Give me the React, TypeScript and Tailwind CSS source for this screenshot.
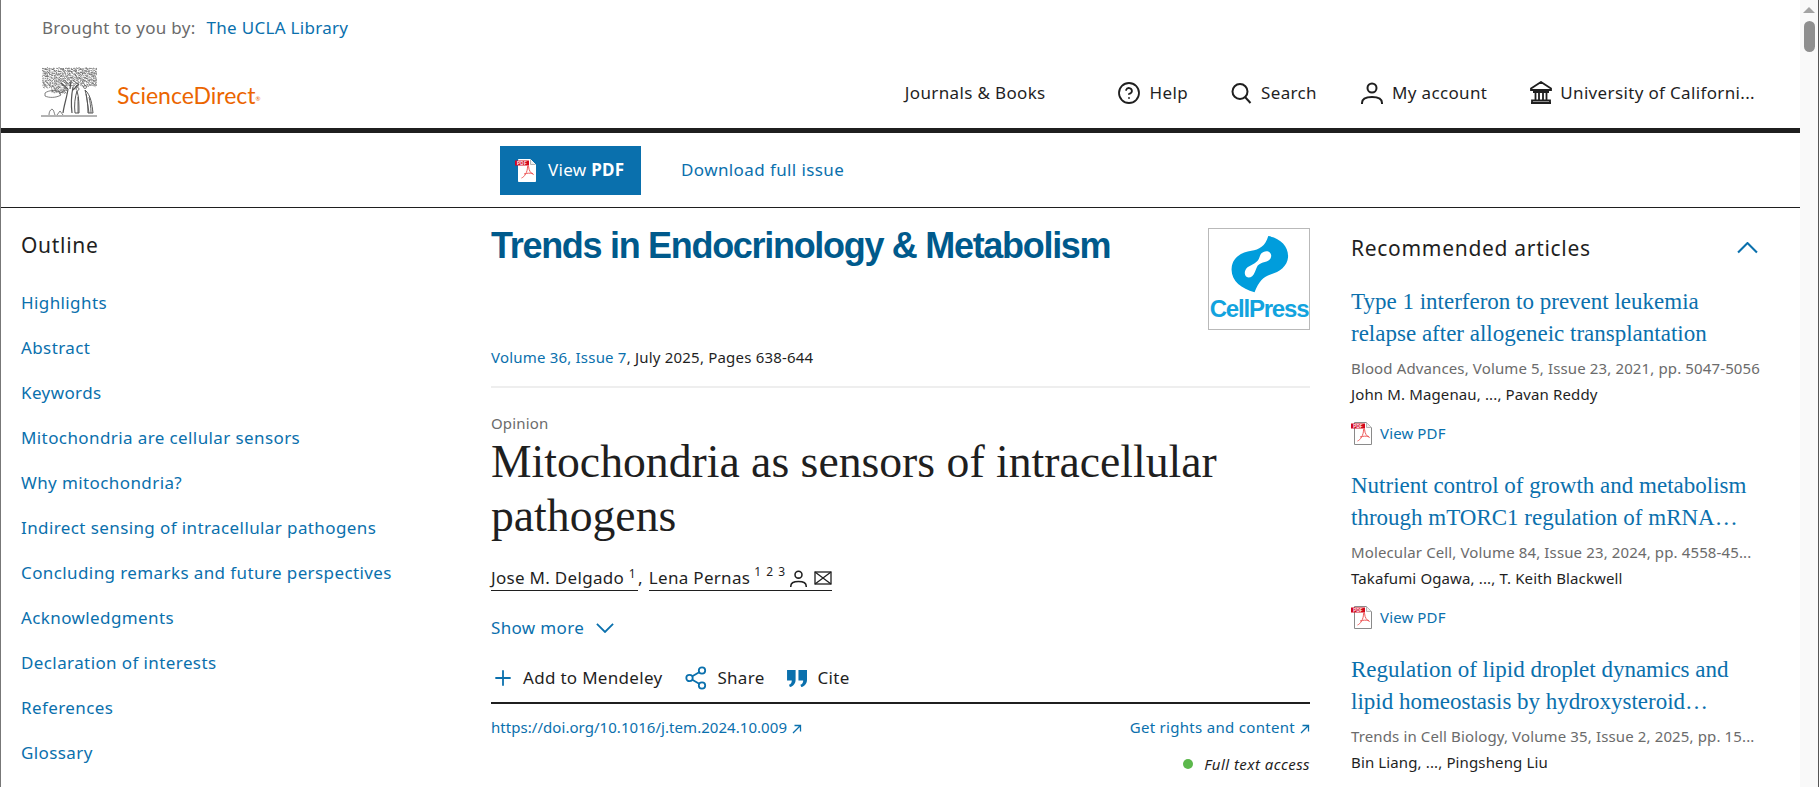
import React from "react";
import { CircleHelp, Plus } from "lucide-react";

const sans = "font-['Noto_Sans','Open_Sans',sans-serif]";
const serif = "font-['Liberation_Serif','Noto_Serif',serif]";

const outline = [
  "Highlights",
  "Abstract",
  "Keywords",
  "Mitochondria are cellular sensors",
  "Why mitochondria?",
  "Indirect sensing of intracellular pathogens",
  "Concluding remarks and future perspectives",
  "Acknowledgments",
  "Declaration of interests",
  "References",
  "Glossary",
];

const articles = [
  {
    title: ["Type 1 interferon to prevent leukemia", "relapse after allogeneic transplantation"],
    source: "Blood Advances, Volume 5, Issue 23, 2021, pp. 5047-5056",
    authors: "John M. Magenau, ..., Pavan Reddy",
    pdf: true,
  },
  {
    title: ["Nutrient control of growth and metabolism", "through mTORC1 regulation of mRNA…"],
    source: "Molecular Cell, Volume 84, Issue 23, 2024, pp. 4558-45...",
    authors: "Takafumi Ogawa, ..., T. Keith Blackwell",
    pdf: true,
  },
  {
    title: ["Regulation of lipid droplet dynamics and", "lipid homeostasis by hydroxysteroid…"],
    source: "Trends in Cell Biology, Volume 35, Issue 2, 2025, pp. 15...",
    authors: "Bin Liang, ..., Pingsheng Liu",
    pdf: false,
  },
];

// scribbled leaves for the tree, seeded so every render gives the same picture
function canopy() {
  let seed = 11;
  const rnd = () => {
    seed = (seed * 16807) % 2147483647;
    return seed / 2147483647;
  };
  let d = "";
  for (let y = 1; y < 25; y += 1.7) {
    for (let x = 1; x < 54; x += 2.2) {
      if (y > 18 && x > 24) continue;
      if (y > 21 && x < 8) continue;
      const a = x + rnd();
      const b = y + rnd();
      d += `M${a.toFixed(1)} ${b.toFixed(1)}q${(rnd() * 2).toFixed(1)} ${(-rnd() * 2).toFixed(1)} ${(1 + rnd() * 2).toFixed(1)} ${(rnd() * 1.5).toFixed(1)}`;
    }
  }
  return d;
}

function TreeLogo() {
  return (
    <svg width="56" height="50" viewBox="0 0 56 50" fill="none" stroke="#555" strokeWidth="0.75">
      <path d={canopy()} />
      <path d="M4 26c4-3 10-3 14-1l2 3c-5 3-12 3-16 1zM18 27l6-4" />
      <path d="M27 22c-1 8-4 16-5 24M32 20c-2 10-2 18-1 26M30 14l-1 8M20 16l7 6M38 17l-6 6" strokeWidth="1.200" />
      <path d="M36 24c-2 6-3 14-2 22h4c0-8 0-16-2-22zM44 23c2 6 3 15 3 23h5c-1-8-2-18-8-23z" strokeWidth="1" />
      <path d="M45 27c1 6 2 12 3 19M48 30c1 5 2 10 2 16M37 30v16" strokeWidth="0.900" />
      <circle cx="36.500" cy="22" r="1.500" />
      <circle cx="44" cy="20" r="1.500" />
      <path d="M0 49h56" strokeWidth="0.900" />
      <path d="M8 48c0-3 1-5 3-6 2 1 2 4 3 6M16 48l3-4 3 4" />
    </svg>
  );
}

function PdfIcon({ label = false }: { label?: boolean }) {
  return (
    <svg width="22" height="23" viewBox="0 0 22 23" fill="none" className="shrink-0">
      <path d="M3.500 3.500V.5h12l5 5v17h-17z" fill="#fff" stroke={label ? "#fff" : "#8a8a8a"} />
      <path d="M15.500.5v5h5" stroke="#b5b5b5" fill="#eee" />
      <path
        d="M6.500 19c3-1 6-6 6-11 0-1.500 1.200-1.500 1.200 0 0 3 2 6.500 5 7.500M9 15c3-1 6-1 9-.5"
        stroke="#ee5a5a"
        strokeWidth="1"
      />
      <rect x="0" y="1.500" width="14" height="5" fill="#d2071b" />
      <text x="7" y="5.700" textAnchor="middle" fontSize="4.500" fontWeight="700" fill="#fff" fontFamily="Liberation Sans, sans-serif">
        PDF
      </text>
    </svg>
  );
}

function SearchIcon() {
  return (
    <svg width="22" height="24" viewBox="0 0 22 24" fill="none" stroke="#1f1f1f" strokeWidth="2">
      <circle cx="10" cy="10.500" r="7.500" />
      <path d="M15 16l5.500 6" />
    </svg>
  );
}

function UserIcon({ size = 22 }: { size?: number }) {
  return (
    <svg width={size} height={size} viewBox="0 0 22 22" fill="none" stroke="#1f1f1f" strokeWidth="2">
      <circle cx="11" cy="6" r="4.500" />
      <path d="M1 22v-1c0-4 4-6 10-6s10 2 10 6v1" />
    </svg>
  );
}

function BankIcon() {
  return (
    <svg width="22" height="23" viewBox="0 0 22 23" fill="none" stroke="#1f1f1f" strokeWidth="1.800">
      <path d="M1 7.500 11 1l10 6.500v1.500H1z" />
      <path d="M3 11h16M5.500 11v8M9 11v8M13 11v8M16.500 11v8" />
      <path d="M2 22v-2.500h18V22zM1 22h20" />
    </svg>
  );
}

function MailIcon() {
  return (
    <svg width="18" height="14" viewBox="0 0 18 14" fill="none" stroke="#1f1f1f" strokeWidth="1.300">
      <rect x="1" y="1" width="16" height="12" />
      <path d="M1 1l8 6 8-6M1 13l8-6 8 6" />
    </svg>
  );
}

function ShareIcon() {
  return (
    <svg width="22" height="24" viewBox="0 0 22 24" fill="none" stroke="#0a70ad" strokeWidth="1.800">
      <circle cx="4.500" cy="12" r="3.200" />
      <circle cx="17" cy="4.500" r="3.200" />
      <circle cx="17" cy="19.500" r="3.200" />
      <path d="M7.300 10.300 14.200 6.200M7.300 13.700l6.900 4.100" />
    </svg>
  );
}

function QuoteIcon() {
  return (
    <svg width="21" height="19" viewBox="0 0 22 20" fill="#0a70ad">
      <path d="M0 1h9v10c0 4-2 7-6 8l-1-2.500c2-.7 3-2 3-4.500H0zM12 1h9v10c0 4-2 7-6 8l-1-2.500c2-.7 3-2 3-4.500h-5z" />
    </svg>
  );
}

function Chevron({ up = false, w }: { up?: boolean; w: number }) {
  return (
    <svg width={w} height={w * 0.55} viewBox="0 0 20 11" fill="none" stroke="#0a70ad" strokeWidth="2">
      <path d={up ? "M1 10 10 1l9 9" : "M1 1l9 9 9-9"} />
    </svg>
  );
}

function ArrowOut() {
  return (
    <svg width="10" height="10" viewBox="0 0 10 10" fill="none" stroke="#0a70ad" strokeWidth="1.300" className="ml-[5px] inline-block">
      <path d="M1 9 8.500 1.500M2.500 1.500h6v6" />
    </svg>
  );
}

function CellPressLogo() {
  return (
    <div className="flex h-[102px] w-[102px] shrink-0 flex-col items-center overflow-hidden border border-[#b9b9b9] bg-white">
      <svg width="59" height="59" viewBox="85 38 185 182" className="mt-[6px]">
        <path
          fillRule="evenodd"
          fill="#009ddc"
          d="M205 40c38 6 64 32 62 66-2 27-26 46-55 54-22 6-38 24-50 56-42-12-74-36-72-74 2-36 32-52 62-56 24-3 44-14 53-46zM190 90C205 82 220 95 212 110 205 122 185 120 172 132 165 142 162 170 143 170 128 168 128 148 140 138 155 128 172 125 178 105 180 98 183 93 190 90z"
        />
      </svg>
      <div className="mt-[2px] font-['Liberation_Sans',sans-serif] text-[24px] font-bold leading-[26px] tracking-[-1.200px] text-[#12a3de]">CellPress</div>
    </div>
  );
}

function Article({ a }: { a: (typeof articles)[number] }) {
  return (
    <div className="mb-[25px]">
      <div className={`${serif} text-[23px] leading-[32px] text-[#0a70ad]`}>
        {a.title.map((t) => (
          <div key={t} className="whitespace-nowrap">{t}</div>
        ))}
      </div>
      <div className="mt-[7px] whitespace-nowrap text-[15px] leading-[22px] tracking-[0.13px] text-[#6b6b6b]">{a.source}</div>
      <div className="mt-[4px] whitespace-nowrap text-[15px] leading-[22px] tracking-[0.13px] text-[#1f1f1f]">{a.authors}</div>
      {a.pdf && (
        <div className="mt-[16px] flex h-[24px] items-center gap-[7px] text-[15px] tracking-[0.13px] text-[#0a70ad]">
          <PdfIcon />
          View PDF
        </div>
      )}
    </div>
  );
}

export default function App() {
  return (
    <div className={`${sans} flex h-[787px] w-[1819px] overflow-hidden bg-white text-[#1f1f1f]`}>
      <div className="w-[1800px] shrink-0 border-l border-[#777]">
        <header className="h-[128px]">
          <div className="flex h-[56px] items-center gap-[11px] pl-[41px] text-[17px] tracking-[0.3px]">
            <span className="text-[#6b6b6b]">Brought to you by:</span>
            <span className="text-[#0a70ad]">The UCLA Library</span>
          </div>
          <div className="flex h-[72px] items-center pl-[40px]">
            <TreeLogo />
            <span className="ml-[20px] mt-[6px] font-['Lato',sans-serif] text-[23px] leading-none text-[#eb6500]">
              ScienceDirect<sup className="text-[6px]">®</sup>
            </span>
            <nav className="ml-auto mt-[1px] flex items-center pr-[45px] text-[17px] tracking-[0.35px]">
              <span className="mr-[71px]">Journals &amp; Books</span>
              <CircleHelp size={24} strokeWidth={1.800} className="mr-[9px]" />
              <span className="mr-[42px]">Help</span>
              <SearchIcon />
              <span className="ml-[9px] mr-[44px]">Search</span>
              <UserIcon />
              <span className="ml-[9px] mr-[43px]">My account</span>
              <BankIcon />
              <span className="ml-[8px]">University of Californi...</span>
            </nav>
          </div>
        </header>
        <div className="h-[5px] bg-[#1f1f1f]" />
        <div className="flex h-[75px] items-center border-b border-[#1f1f1f] pl-[499px]">
          <button className="flex h-[49px] w-[141px] items-center gap-[11px] bg-[#0a70ad] pl-[15px] text-[17px] tracking-[0.3px] text-white">
            <PdfIcon label />
            <span>
              View <b>PDF</b>
            </span>
          </button>
          <span className="ml-[40px] text-[17px] tracking-[0.4px] text-[#0a70ad]">Download full issue</span>
        </div>

        <main className="flex">
          <aside className="w-[490px] shrink-0 pl-[20px] pt-[24px]">
            <h2 className="text-[21px] leading-[26px] tracking-[0.7px]">Outline</h2>
            <ul className="mt-[22px] text-[17px] tracking-[0.4px] text-[#0a70ad]">
              {outline.map((o) => (
                <li key={o} className="flex h-[45px] items-center whitespace-nowrap">{o}</li>
              ))}
            </ul>
          </aside>

          <article className="w-[819px] shrink-0 pt-[20px]">
            <div className="flex justify-between">
              <h2 className="font-['Liberation_Sans',sans-serif] text-[36px] font-bold leading-[36px] tracking-[-1.300px] text-[#005a8c]">
                Trends in Endocrinology &amp; Metabolism
              </h2>
              <CellPressLogo />
            </div>
            <div className="mt-[17px] text-[15px] leading-[20px] tracking-[0.2px]">
              <span className="text-[#0a70ad]">Volume 36, Issue 7</span>, July 2025, Pages 638-644
            </div>
            <div className="mt-[19px] h-[2px] bg-[#eeeeee]" />
            <div className="mt-[25px] text-[15px] leading-[20px] tracking-[0.15px] text-[#6b6b6b]">Opinion</div>
            <h1 className={`${serif} mt-[2px] text-[45.700px] leading-[54px] text-[#1f1f1f]`}>
              Mitochondria as sensors of intracellular
              <br />
              pathogens
            </h1>
            <div className="mt-[23px] flex items-start text-[17px] leading-[24px] tracking-[0.3px]">
              <span className="border-b border-[#1f1f1f] pr-[2px]">
                Jose M. Delgado <sup className="text-[12px]">1</sup>
              </span>
              <span className="mr-[6px]">,</span>
              <span className="flex items-center border-b border-[#1f1f1f]">
                Lena Pernas <sup className="ml-[4px] text-[12px] tracking-[1px]">1 2 3</sup>
                <span className="ml-[4px]"><UserIcon size={17} /></span>
                <span className="ml-[7px]"><MailIcon /></span>
              </span>
            </div>
            <div className="mt-[25px] flex items-center gap-[12px] text-[17px] leading-[24px] tracking-[0.35px] text-[#0a70ad]">
              Show more
              <Chevron w={18} />
            </div>
            <div className="mt-[25px] flex h-[26px] items-center text-[17px] tracking-[0.3px]">
              <Plus size={24} strokeWidth={1.800} className="text-[#0a70ad]" />
              <span className="ml-[8px]">Add to Mendeley</span>
              <span className="ml-[23px]"><ShareIcon /></span>
              <span className="ml-[10px]">Share</span>
              <span className="ml-[22px]"><QuoteIcon /></span>
              <span className="ml-[10px]">Cite</span>
            </div>
            <div className="mt-[11px] h-[2px] bg-[#1f1f1f]" />
            <div className="mt-[13px] flex justify-between text-[15px] leading-[20px] text-[#0a70ad]">
              <span className="tracking-[0.05px]">https://doi.org/10.1016/j.tem.2024.10.009<ArrowOut /></span>
              <span className="tracking-[0.3px]">Get rights and content<ArrowOut /></span>
            </div>
            <div className="mt-[17px] flex items-center justify-end gap-[11px] text-[15px] italic leading-[20px] tracking-[0.45px]">
              <span className="h-[10px] w-[10px] rounded-full bg-[#5cb84c]" />
              Full text access
            </div>
          </article>

          <aside className="ml-[41px] w-[409px] shrink-0 pt-[27px]">
            <div className="flex items-center justify-between pr-[2px]">
              <h2 className="text-[21px] leading-[26px] tracking-[0.7px]">Recommended articles</h2>
              <Chevron up w={21} />
            </div>
            <div className="mt-[25px]">
              {articles.map((a) => (
                <Article key={a.authors} a={a} />
              ))}
            </div>
          </aside>
        </main>
      </div>

      <div className="relative w-[19px] shrink-0 border-r border-[#555] bg-[#f9f9f9]">
        <div className="mx-auto mt-[7px] h-0 w-0 border-x-[6px] border-b-[6px] border-x-transparent border-b-[#a3a3a3]" />
        <div className="mx-auto mt-[8px] h-[31px] w-[11px] rounded-full bg-[#8f8f8f]" />
      </div>
    </div>
  );
}
